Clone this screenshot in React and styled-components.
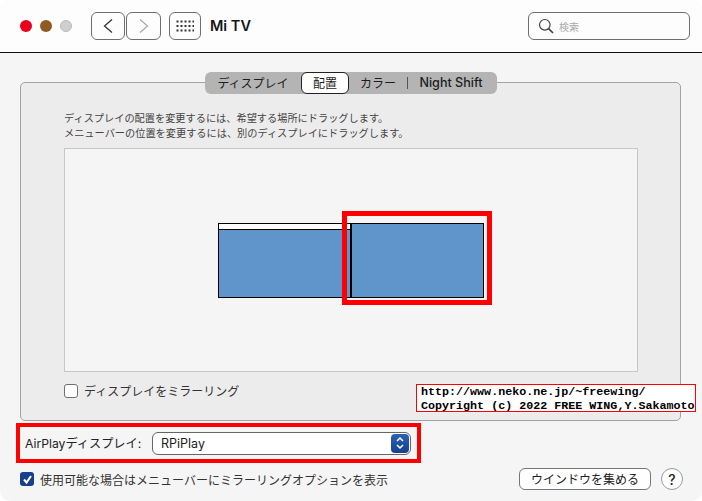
import React from 'react';
import styled, { createGlobalStyle } from 'styled-components';

const GlobalStyle = createGlobalStyle`
    html, body {
        margin: 0;
        padding: 0;
        background: #fff;
    }
    body {
        font-family: "Inter", "Noto Sans CJK JP", sans-serif;
        color: #222;
    }
`;

const Window = styled.div`
    width: 702px;
    height: 501px;
    background: #f5f5f5;
    border-radius: 10px;
    overflow: hidden;
    box-sizing: border-box;
`;

const TitleBar = styled.header`
    height: 53px;
    box-sizing: border-box;
    background: #fdfdfd;
    border-bottom: 1px solid #111;
    display: flex;
    align-items: center;
    padding: 0 12px 1px 20px;
`;

const Light = styled.span`
    width: 12px;
    height: 12px;
    border-radius: 50%;
    margin-right: 8px;
    background: ${p => p.$color};
    box-sizing: border-box;
    border: ${p => p.$border ? '1px solid #bbb' : 'none'};
`;

const ToolButton = styled.button`
    width: ${p => p.$w}px;
    height: 28px;
    margin: 0 ${p => p.$mr || 0}px 0 ${p => p.$ml || 0}px;
    padding: 0;
    display: flex;
    align-items: center;
    justify-content: center;
    background: #fdfdfd;
    border: 1px solid #6e6e6e;
    border-radius: 6px;
`;

const Title = styled.h1`
    margin: 0 0 0 9px;
    font-size: 14.5px;
    font-weight: 600;
    color: #151515;
`;

const Search = styled.div`
    margin-left: auto;
    width: 162px;
    height: 28px;
    box-sizing: border-box;
    border: 1px solid #6e6e6e;
    border-radius: 6px;
    display: flex;
    align-items: center;
    gap: 5px;
    padding-left: 9px;
    font-size: 10px;
    color: #aaa;
`;

const SearchLabel = styled.span`
    padding-top: 1px;
`;

const Content = styled.main`
    padding: 29px 21px 0 20px;
`;

const Panel = styled.section`
    position: relative;
    height: 339px;
    box-sizing: border-box;
    background: #ececec;
    border: 1px solid #a3a3a3;
    border-radius: 5px;
    padding: 28px 43px 0 43px;
`;

const Tabs = styled.nav`
    position: absolute;
    top: -11px;
    left: 184px;
    width: 292px;
    height: 22px;
    box-sizing: border-box;
    background: #b4b4b4;
    border-radius: 6px;
    display: flex;
    align-items: center;
    font-size: 12px;
    color: #1d1d1d;
`;

const Tab = styled.span`
    width: ${p => p.$w}px;
    height: 22px;
    margin-left: ${p => p.$ml || 0}px;
    padding-bottom: ${p => p.$latin ? 1 : 2}px;
    box-sizing: border-box;
    display: flex;
    align-items: center;
    justify-content: center;
    flex: none;
    white-space: nowrap;
    font-size: ${p => p.$latin ? 12.6 : 12}px;
    font-weight: ${p => p.$latin ? 500 : 400};
    ${p => p.$active && `
        background: #fff;
        border: 1px solid #222;
        border-radius: 6px;
    `}
`;

const TabDivider = styled.span`
    width: 1px;
    height: 12px;
    background: #555;
    margin: 0 11px 0 5px;
    flex: none;
`;

const Hint = styled.p`
    margin: 0 0 7px 0;
    font-size: 10.2px;
    line-height: 15px;
    color: #444;
    white-space: nowrap;
`;

const Arrangement = styled.div`
    position: relative;
    width: 574px;
    height: 224px;
    box-sizing: border-box;
    background: #f5f5f5;
    border: 1px solid #c6c6c6;
`;

const DisplayBox = styled.div`
    position: absolute;
    left: ${p => p.$x}px;
    top: 74px;
    width: ${p => p.$w}px;
    height: 75px;
    box-sizing: border-box;
    background: #5f95ca;
    border: 1px solid #000;
`;

const MenuStrip = styled.div`
    height: 5px;
    background: #fff;
    border-bottom: 1px solid #000;
`;

const DragDivider = styled.div`
    position: absolute;
    left: 285px;
    top: 74px;
    width: 2px;
    height: 75px;
    background: #000;
`;

const RedMark = styled.div`
    position: absolute;
    left: 277px;
    top: 62px;
    width: 150px;
    height: 94px;
    box-sizing: border-box;
    border: 5px solid #f00;
`;

const CheckRow = styled.label`
    display: flex;
    align-items: center;
    gap: 6px;
    font-size: 12px;
    color: #333;
    white-space: nowrap;
`;

const MirrorRow = styled(CheckRow)`
    margin-top: 10px;
`;

const EmptyBox = styled.span`
    width: 14px;
    height: 14px;
    box-sizing: border-box;
    background: #fff;
    border: 1px solid #707070;
    border-radius: 3px;
    flex: none;
`;

const TickBox = styled.span`
    width: 14px;
    height: 14px;
    background: #183f8c;
    border-radius: 3px;
    flex: none;
    display: flex;
    align-items: center;
    justify-content: center;
`;

const Watermark = styled.div`
    position: absolute;
    left: 395px;
    top: 301px;
    width: 280px;
    height: 28px;
    box-sizing: border-box;
    background: #fff;
    border: 1px solid #f00;
    padding: 0 0 0 4px;
    font-family: "Liberation Mono", monospace;
    font-weight: 700;
    font-size: 11.7px;
    line-height: 14px;
    color: #000;
    white-space: pre;
`;

const AirPlayRow = styled.div`
    margin: 2px 0 0 -4px;
    width: 405px;
    height: 40px;
    box-sizing: border-box;
    border: 4px solid #f00;
    display: flex;
    align-items: center;
    padding: 0 6px 0 5px;
    font-size: 12.2px;
    color: #222;
    white-space: nowrap;
`;

const Select = styled.div`
    margin-left: auto;
    width: 259px;
    height: 23px;
    box-sizing: border-box;
    background: #fff;
    border: 1px solid #666;
    border-radius: 6px;
    display: flex;
    align-items: center;
    justify-content: space-between;
    padding-left: 8px;
    font-size: 12.5px;
    color: #1c1c1c;
`;

const Stepper = styled.span`
    width: 18px;
    height: 19px;
    margin-right: 1px;
    background: linear-gradient(#2b62b4, #173f8e);
    border-radius: 4px;
    display: flex;
    align-items: center;
    justify-content: center;
`;

const Footer = styled.div`
    display: flex;
    align-items: center;
    margin: 5px -2px 0 0;
    height: 22px;
`;

const GatherButton = styled.button`
    margin-left: auto;
    width: 132px;
    height: 22px;
    padding: 0 0 2px;
    background: #fff;
    border: 1px solid #777;
    border-radius: 6px;
    font-family: inherit;
    font-size: 12px;
    color: #222;
`;

const HelpButton = styled.button`
    margin-left: 10px;
    width: 22px;
    height: 22px;
    padding: 0;
    background: #fff;
    border: 1px solid #999;
    border-radius: 50%;
    font-family: inherit;
    font-size: 14px;
    font-weight: 500;
    color: #222;
`;

const App = () => (
    <>
        <GlobalStyle />
        <Window>
            <TitleBar>
                <Light $color="#e8001c" />
                <Light $color="#8f5a22" />
                <Light $color="#cfcfcf" $border />
                <ToolButton $w={34} $ml={11}>
                    <svg width="12" height="16" viewBox="0 0 12 16" fill="none" stroke="#333" strokeWidth="1.3">
                        <path d="M10 1.5 L2.5 8 L10 14.5" />
                    </svg>
                </ToolButton>
                <ToolButton $w={35} $ml={1}>
                    <svg width="12" height="16" viewBox="0 0 12 16" fill="none" stroke="#aaa" strokeWidth="1.3">
                        <path d="M2 1.5 L9.5 8 L2 14.5" />
                    </svg>
                </ToolButton>
                <ToolButton $w={32} $ml={8}>
                    <svg width="18" height="12" viewBox="0 0 18 12" fill="#333">
                        {[0, 1, 2].map(r => [0, 1, 2, 3, 4].map(c => (
                            <rect key={`${r}-${c}`} x={c * 4 + 0.5} y={r * 4.5 + 0.5} width="2" height="2" />
                        )))}
                    </svg>
                </ToolButton>
                <Title>Mi TV</Title>
                <Search>
                    <svg width="16" height="16" viewBox="0 0 16 16" fill="none" stroke="#444" strokeWidth="1.2">
                        <circle cx="6.8" cy="6.8" r="5.3" />
                        <path d="M10.6 10.6 L15 15" strokeWidth="1.7" />
                    </svg>
                    <SearchLabel>検索</SearchLabel>
                </Search>
            </TitleBar>
            <Content>
                <Panel>
                    <Tabs>
                        <Tab $w={96}>ディスプレイ</Tab>
                        <Tab $w={48} $active>配置</Tab>
                        <Tab $w={48} $ml={5}>カラー</Tab>
                        <TabDivider />
                        <Tab $w={64} $latin>Night Shift</Tab>
                    </Tabs>
                    <Hint>
                        ディスプレイの配置を変更するには、希望する場所にドラッグします。<br />
                        メニューバーの位置を変更するには、別のディスプレイにドラッグします。
                    </Hint>
                    <Arrangement>
                        <DisplayBox $x={153} $w={133}>
                            <MenuStrip />
                        </DisplayBox>
                        <DisplayBox $x={285} $w={134} />
                        <DragDivider />
                        <RedMark />
                    </Arrangement>
                    <MirrorRow>
                        <EmptyBox />
                        ディスプレイをミラーリング
                    </MirrorRow>
                    <Watermark>{'http://www.neko.ne.jp/~freewing/\nCopyright (c) 2022 FREE WING,Y.Sakamoto'}</Watermark>
                </Panel>
                <AirPlayRow>
                    AirPlayディスプレイ:
                    <Select>
                        RPiPlay
                        <Stepper>
                            <svg width="10" height="14" viewBox="0 0 10 14" fill="none" stroke="#fff" strokeWidth="1.5">
                                <path d="M2 5 L5 2 L8 5 M2 9 L5 12 L8 9" />
                            </svg>
                        </Stepper>
                    </Select>
                </AirPlayRow>
                <Footer>
                    <CheckRow>
                        <TickBox>
                            <svg width="11" height="11" viewBox="0 0 11 11" fill="none" stroke="#fff" strokeWidth="2">
                                <path d="M2 5.5 L4.5 8.5 L9 2" />
                            </svg>
                        </TickBox>
                        使用可能な場合はメニューバーにミラーリングオプションを表示
                    </CheckRow>
                    <GatherButton>ウインドウを集める</GatherButton>
                    <HelpButton>?</HelpButton>
                </Footer>
            </Content>
        </Window>
    </>
);

export default App;
